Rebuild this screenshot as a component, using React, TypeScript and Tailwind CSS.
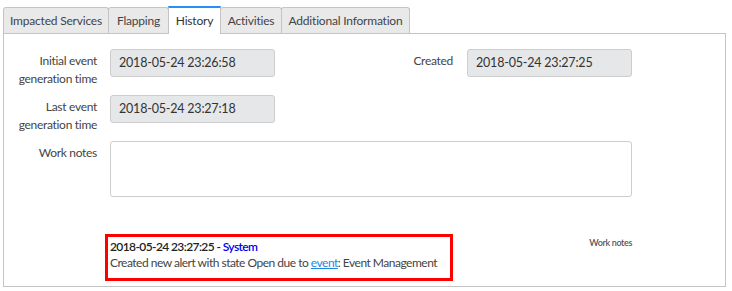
const tabs = [
  { label: 'Impacted Services', width: 'w-[106px]' },
  { label: 'Flapping', width: 'w-[61px]' },
  { label: 'History', width: 'w-[53px]', active: true },
  { label: 'Activities', width: 'w-[62px]' },
  { label: 'Additional Information', width: 'w-[129px]' },
];

const ReadOnlyField = ({ value }: { value: string }) => (
  <div className="w-[165px] h-[28px] rounded-[3px] border border-[#cdcdcd] bg-[#e6e7e8] pl-[8px] text-[12.5px] leading-[26px] tracking-[-0.2px] text-[#333]">
    {value}
  </div>
);

const FieldLabel = ({ children, className }: { children: React.ReactNode; className: string }) => (
  <div className={`${className} whitespace-nowrap pt-[3px] text-right text-[12px] leading-[18px] tracking-[-0.3px] text-[#444]`}>
    {children}
  </div>
);

export default function App() {
  return (
    <div className="h-[291px] w-[732px] bg-white font-['Lato','Liberation_Sans',sans-serif] text-[#333]">
      <div className="flex pl-[3px] pt-[6px]">
        {tabs.map((tab) =>
          tab.active ? (
            <div
              key={tab.label}
              className={`${tab.width} relative z-10 -ml-px h-[28px] whitespace-nowrap border-x border-t-2 border-[#c4c4c4] border-t-[#278efc] bg-white text-center text-[12px] leading-[25px] tracking-[-0.2px] text-[#333]`}
            >
              {tab.label}
            </div>
          ) : (
            <div
              key={tab.label}
              className={`${tab.width} mt-px -ml-px h-[26px] whitespace-nowrap rounded-t-[3px] border border-b-0 border-[#c4c4c4] bg-[#e9e9e9] text-center text-[12px] leading-[25px] tracking-[-0.2px] text-[#444] first:ml-0`}
            >
              {tab.label}
            </div>
          )
        )}
      </div>
      <div className="-mt-px ml-[3px] h-[254px] w-[723px] border border-[#c4c4c4] pt-[15px]">
        <div className="flex items-start">
          <FieldLabel className="w-[93px]">
            Initial event
            <br />
            generation time
          </FieldLabel>
          <div className="ml-[13px]">
            <ReadOnlyField value="2018-05-24 23:26:58" />
          </div>
          <FieldLabel className="w-[178px]">Created</FieldLabel>
          <div className="ml-[14px]">
            <ReadOnlyField value="2018-05-24 23:27:25" />
          </div>
        </div>
        <div className="mt-[7px] flex items-start">
          <FieldLabel className="w-[93px]">
            Last event
            <br />
            generation time
          </FieldLabel>
          <div className="ml-[13px]">
            <ReadOnlyField value="2018-05-24 23:27:18" />
          </div>
        </div>
        <div className="mt-[7px] flex items-start">
          <FieldLabel className="w-[93px]">Work notes</FieldLabel>
          <textarea className="ml-[13px] h-[56px] w-[522px] resize-none rounded-[3px] border border-[#cdcdcd] bg-white outline-none" />
        </div>
        <div className="mt-[37px] flex items-start pl-[101px]">
          <div className="h-[47px] w-[348px] whitespace-nowrap border-[3px] border-[#ff0000] px-[2px] pt-[2px] text-[12px] leading-[16px]">
            <div className="font-semibold tracking-[-0.6px] text-[#222]">
              2018-05-24 23:27:25 - <span className="text-[#0000ee]">System</span>
            </div>
            <div className="tracking-[-0.5px] text-[#444]">
              Created new alert with state Open due to{' '}
              <a className="text-[#1e88e5] underline">event</a>: Event Management
            </div>
          </div>
          <div className="ml-auto mr-[93px] whitespace-nowrap pt-[3px] text-[9px] font-semibold leading-[12px] tracking-[-0.35px] text-[#555]">
            Work notes
          </div>
        </div>
      </div>
    </div>
  );
}
